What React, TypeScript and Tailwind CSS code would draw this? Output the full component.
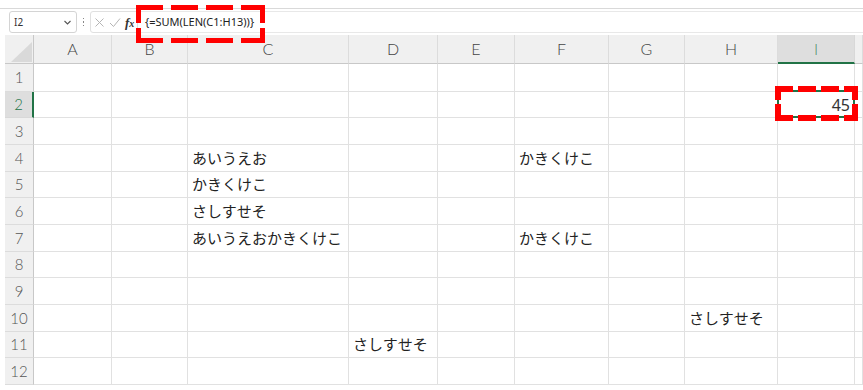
import React from "react";

const COLS = ["A", "B", "C", "D", "E", "F", "G", "H", "I", ""];
const DATA: Record<string, string> = {
  "4-2": "あいうえお",
  "4-5": "かきくけこ",
  "5-2": "かきくけこ",
  "6-2": "さしすせそ",
  "7-2": "あいうえおかきくけこ",
  "7-5": "かきくけこ",
  "10-7": "さしすせそ",
  "11-3": "さしすせそ",
};
const ROWS = [1, 2, 3, 4, 5, 6, 7, 8, 9, 10, 11, 12];

const jp = { fontFamily: '"Noto Sans CJK JP", "Noto Sans", sans-serif' };
const ui = { fontFamily: '"Noto Sans", "Noto Sans CJK JP", sans-serif' };
const light = { fontFamily: 'Lato, "Noto Sans", sans-serif' };

function TopBar() {
  return (
    <div className="h-[35px] flex flex-col">
      <div className="h-[9px] border-b border-[#d9d9d9]" />
      <div className="flex items-start pt-[2px] pl-[9px]">
        <div className="w-[68px] h-[22px] border border-[#d4d4d4] rounded-[3px] flex items-center justify-between pl-[4px] pr-[4px]">
          <span className="text-[10px] text-[#333]" style={ui}>I2</span>
          <svg width="9" height="9" viewBox="0 0 9 9">
            <path d="M1.5 3 L4.5 6 L7.5 3" fill="none" stroke="#555" strokeWidth="1.1" />
          </svg>
        </div>
        <div className="w-[13px] h-[22px] flex flex-col items-center justify-center gap-[2px]">
          <div className="w-[1.5px] h-[1.5px] bg-[#888]" />
          <div className="w-[1.5px] h-[1.5px] bg-[#888]" />
          <div className="w-[1.5px] h-[1.5px] bg-[#888]" />
        </div>
        <div className="w-[48px] h-[22px] border border-[#e0e0e0] rounded-l-[3px] flex items-center pl-[3px] gap-[4px]">
          <svg width="11" height="11" viewBox="0 0 11 11">
            <path d="M1.5 1.5 L9.5 9.5 M9.5 1.5 L1.5 9.5" stroke="#b5b5b5" strokeWidth="1" fill="none" />
          </svg>
          <svg width="12" height="11" viewBox="0 0 12 11">
            <path d="M1 6 L4.5 9.5 L11 1.5" stroke="#b5b5b5" strokeWidth="1" fill="none" />
          </svg>
          <span className="text-[13px] italic font-bold text-[#333] leading-none" style={{ fontFamily: '"Liberation Serif", serif' }}>
            f<span className="text-[10px]">x</span>
          </span>
        </div>
        <div className="flex-1 h-[22px] border-y border-[#e8e8e8] flex items-center pl-[7px]">
          <span className="text-[11px] text-[#222]" style={ui}>{"{=SUM(LEN(C1:H13))}"}</span>
        </div>
      </div>
    </div>
  );
}

function Sheet() {
  const cells: React.ReactNode[] = [];
  cells.push(
    <div key="corner" className="bg-[#f0f0f0] border-r border-b border-[#c8c8c8] flex items-end justify-end">
      <svg width="21" height="20" viewBox="0 0 21 20" className="mb-[1px] mr-[1px]">
        <polygon points="21,0 21,20 0,20" fill="#d9d9d9" />
      </svg>
    </div>
  );
  COLS.forEach((c, i) => {
    const sel = c === "I";
    cells.push(
      <div
        key={"h" + i}
        className={
          sel
            ? "bg-[#dedede] border-r border-r-[#d8d8d8] border-b-2 border-b-[#217346] flex items-center justify-center text-[16px] font-light text-[#4f8f6a]"
            : "bg-[#f0f0f0] border-r border-r-[#dcdcdc] border-b border-b-[#c8c8c8] flex items-center justify-center text-[16px] font-light text-[#444]"
        }
        style={light}
      >
        {c}
      </div>
    );
  });
  ROWS.forEach((r) => {
    const sel = r === 2;
    cells.push(
      <div
        key={"r" + r}
        className={
          sel
            ? "bg-[#dedede] border-r-2 border-r-[#217346] border-b border-b-[#d8d8d8] flex items-center justify-center text-[15px] font-light text-[#217346]"
            : "bg-[#f0f0f0] border-r border-r-[#c8c8c8] border-b border-b-[#dcdcdc] flex items-center justify-center text-[15px] font-light text-[#555]"
        }
        style={light}
      >
        {r}
      </div>
    );
    COLS.forEach((_, ci) => {
      const text = DATA[r + "-" + ci];
      if (r === 2 && ci === 8) {
        cells.push(
          <div key={r + "-" + ci} className="relative border-r border-b border-[#e1e1e1] flex items-center justify-end pr-[4px]">
            <div className="absolute -left-[1px] -top-[2px] right-[-1px] bottom-[-1px] border-2 border-[#217346]" />
            <span className="text-[16px] text-[#333]" style={ui}>45</span>
          </div>
        );
        return;
      }
      cells.push(
        <div key={r + "-" + ci} className="border-r border-b border-[#e1e1e1] flex items-center pl-[4px] overflow-visible whitespace-nowrap">
          {text ? (
            <span className="text-[15px] text-[#222]" style={jp}>
              {text}
            </span>
          ) : null}
        </div>
      );
    });
  });
  return (
    <div className="ml-[5px] grid grid-cols-[29px_78px_76px_161px_89px_77px_94px_76px_93px_77px_1fr] grid-rows-[29px_28px_26px_27px_27px_26px_27px_27px_26px_27px_27px_26px_27px]">
      {cells}
    </div>
  );
}

function Annotations() {
  return (
    <svg className="absolute left-0 top-0 pointer-events-none" width="863" height="390" viewBox="0 0 863 390">
      <g stroke="#ff0000" fill="none">
        <g strokeWidth="5">
          <line x1="136" y1="7.5" x2="265" y2="7.5" strokeDasharray="27 8" />
          <line x1="136" y1="40.5" x2="265" y2="40.5" strokeDasharray="27 8" />
          <line x1="138.5" y1="5" x2="138.5" y2="43" strokeDasharray="18 5" />
          <line x1="262.5" y1="5" x2="262.5" y2="43" strokeDasharray="18 5" />
        </g>
        <g strokeWidth="6">
          <line x1="775" y1="89" x2="858" y2="89" strokeDasharray="18 5" />
          <line x1="775" y1="118" x2="858" y2="118" strokeDasharray="18 5" />
          <line x1="778" y1="86" x2="778" y2="121" strokeDasharray="14 4" />
          <line x1="855" y1="86" x2="855" y2="121" strokeDasharray="14 4" />
        </g>
      </g>
    </svg>
  );
}

export default function App() {
  return (
    <div className="relative w-[863px] h-[390px] bg-white overflow-hidden">
      <TopBar />
      <Sheet />
      <Annotations />
    </div>
  );
}
